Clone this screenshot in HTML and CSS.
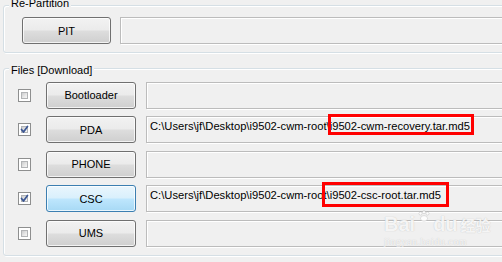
FILE: index.html
```html
<!DOCTYPE html>
<html lang="en">
<head>
<meta charset="utf-8">
<title>Odin</title>
<link rel="stylesheet" href="styles.css">
</head>
<body>
<div class="page">
  <div class="group group-partition">
    <span class="legend">Re-Partition</span>
    <div class="row">
      <button class="btn btn-pit">PIT</button>
      <div class="field"></div>
    </div>
  </div>

  <div class="group group-files">
    <span class="legend">Files [Download]</span>
    <div class="rows">
      <div class="row">
        <span class="check"></span>
        <button class="btn">Bootloader</button>
        <div class="field"></div>
      </div>
      <div class="row">
        <span class="check on"><svg viewBox="0 0 13 13" class="tick"><path d="M3.5 6.5 L5.5 9 L9.5 3.5"/></svg></span>
        <button class="btn">PDA</button>
        <div class="field">C:\Users\jf\Desktop\i9502-cwm-root\i9502-cwm-recovery.tar.md5<span class="mark mark-pda"></span></div>
      </div>
      <div class="row">
        <span class="check"></span>
        <button class="btn">PHONE</button>
        <div class="field"></div>
      </div>
      <div class="row">
        <span class="check on"><svg viewBox="0 0 13 13" class="tick"><path d="M3.5 6.5 L5.5 9 L9.5 3.5"/></svg></span>
        <button class="btn btn-focus">CSC</button>
        <div class="field">C:\Users\jf\Desktop\i9502-cwm-root\i9502-csc-root.tar.md5<span class="mark mark-csc"></span></div>
      </div>
      <div class="row">
        <span class="check"></span>
        <button class="btn">UMS</button>
        <div class="field"></div>
      </div>
    </div>
  </div>
</div>

<div class="watermark">
  <div class="wm-top">
    <span class="wm-bai">Bai</span>
    <svg class="wm-paw" viewBox="0 0 20 20"><circle cx="5" cy="5" r="2.2"/><circle cx="10" cy="3" r="2.2"/><circle cx="15" cy="5" r="2.2"/><ellipse cx="10" cy="12" rx="5" ry="4"/></svg>
    <span class="wm-du">du</span>
    <span class="wm-cn">经验</span>
  </div>
  <div class="wm-url">jingyan.baidu.com</div>
</div>
</body>
</html>
```

FILE: styles.css
```css
html, body {
  margin: 0;
}
body {
  background: #f0f0f0;
  font: 11px "Liberation Sans", Arial, sans-serif;
  color: #000;
  width: 502px;
  height: 262px;
  overflow: hidden;
  position: relative;
}
.page {
  padding: 5px 0 0 3px;
  width: 640px;
}
.group {
  position: relative;
  border: 1px solid #d5dfe5;
  border-radius: 3px;
  box-shadow: inset 1px 1px 0 #fff, 1px 1px 0 #fff;
}
.legend {
  position: absolute;
  left: 5px;
  top: -5px;
  padding: 0 2px;
  line-height: 13px;
  background: #f0f0f0;
}
.group-partition {
  padding: 11px 0 8px 18px;
}
.group-partition .legend {
  top: -9px;
}
.group-files {
  margin-top: 15px;
  padding: 12.5px 0 8.5px 14px;
}
.rows {
  display: flex;
  flex-direction: column;
  gap: 7.5px;
}
.row {
  display: flex;
  align-items: center;
  height: 27px;
}
.check {
  position: relative;
  box-sizing: border-box;
  width: 13px;
  height: 13px;
  margin-right: 15px;
  border: 1px solid #8e8f8f;
  background: #fff;
  padding: 2px;
  display: flex;
  flex: none;
}
.check::before {
  content: "";
  flex: 1;
  border: 1px solid #b2b4b6;
  background: linear-gradient(135deg, #cbcccd 0%, #e8e8e8 60%, #f6f6f6 100%);
}
.tick {
  position: absolute;
  left: -1px;
  top: -1px;
  width: 13px;
  height: 13px;
}
.tick path {
  fill: none;
  stroke: #3b5693;
  stroke-width: 1.7;
  stroke-linecap: round;
  stroke-linejoin: round;
}
.btn {
  flex: none;
  box-sizing: border-box;
  width: 90px;
  height: 27px;
  margin: 0 10px 0 0;
  padding: 0;
  font: 11px "Liberation Sans", Arial, sans-serif;
  color: #000;
  border: 1px solid #707070;
  border-radius: 3px;
  background: linear-gradient(to bottom, #f2f2f2 0%, #ebebeb 48%, #dddddd 52%, #cfcfcf 100%);
  box-shadow: inset 0 0 0 1px rgba(255, 255, 255, 0.75);
}
.btn-pit {
  width: 89px;
  margin-right: 9px;
}
.btn-focus {
  border-color: #3c7fb1;
  background: linear-gradient(to bottom, #eaf6fd 0%, #d9f0fc 48%, #bee6fd 52%, #a7d9f5 100%);
}
.field {
  position: relative;
  flex: 1;
  box-sizing: border-box;
  height: 27px;
  border: 1px solid #bcbcbc;
  box-shadow: inset 1px 1px 0 #fff, 1px 1px 0 #fff;
  padding: 3px 3px;
  font-size: 11.2px;
  line-height: 13px;
  white-space: nowrap;
}
.mark {
  position: absolute;
  box-sizing: border-box;
  border: 3px solid #f00;
}
.mark-pda {
  left: 181px;
  top: -3px;
  width: 146px;
  height: 21px;
}
.mark-csc {
  left: 175px;
  top: -4px;
  width: 127px;
  height: 25px;
}
.watermark {
  position: absolute;
  left: 384px;
  top: 210px;
  color: rgba(255, 255, 255, 0.85);
  text-shadow: 0 0 1px rgba(150, 150, 150, 0.6);
  pointer-events: none;
}
.wm-top {
  display: flex;
  align-items: flex-end;
  height: 24px;
}
.wm-bai, .wm-du {
  font: bold 20px "Liberation Sans", Arial, sans-serif;
  line-height: 20px;
}
.wm-paw {
  width: 14px;
  height: 14px;
  margin: 0 -14px 10px 2px;
  fill: rgba(255, 255, 255, 0.85);
  stroke: rgba(150, 150, 150, 0.5);
  stroke-width: 0.8;
}
.wm-du {
  margin-left: 16px;
}
.wm-cn {
  font: bold 15px "Noto Sans CJK SC", sans-serif;
  line-height: 18px;
  margin-left: 3px;
}
.wm-url {
  font: 10px "Liberation Serif", serif;
  letter-spacing: 0.5px;
  margin-top: 2px;
}
```
